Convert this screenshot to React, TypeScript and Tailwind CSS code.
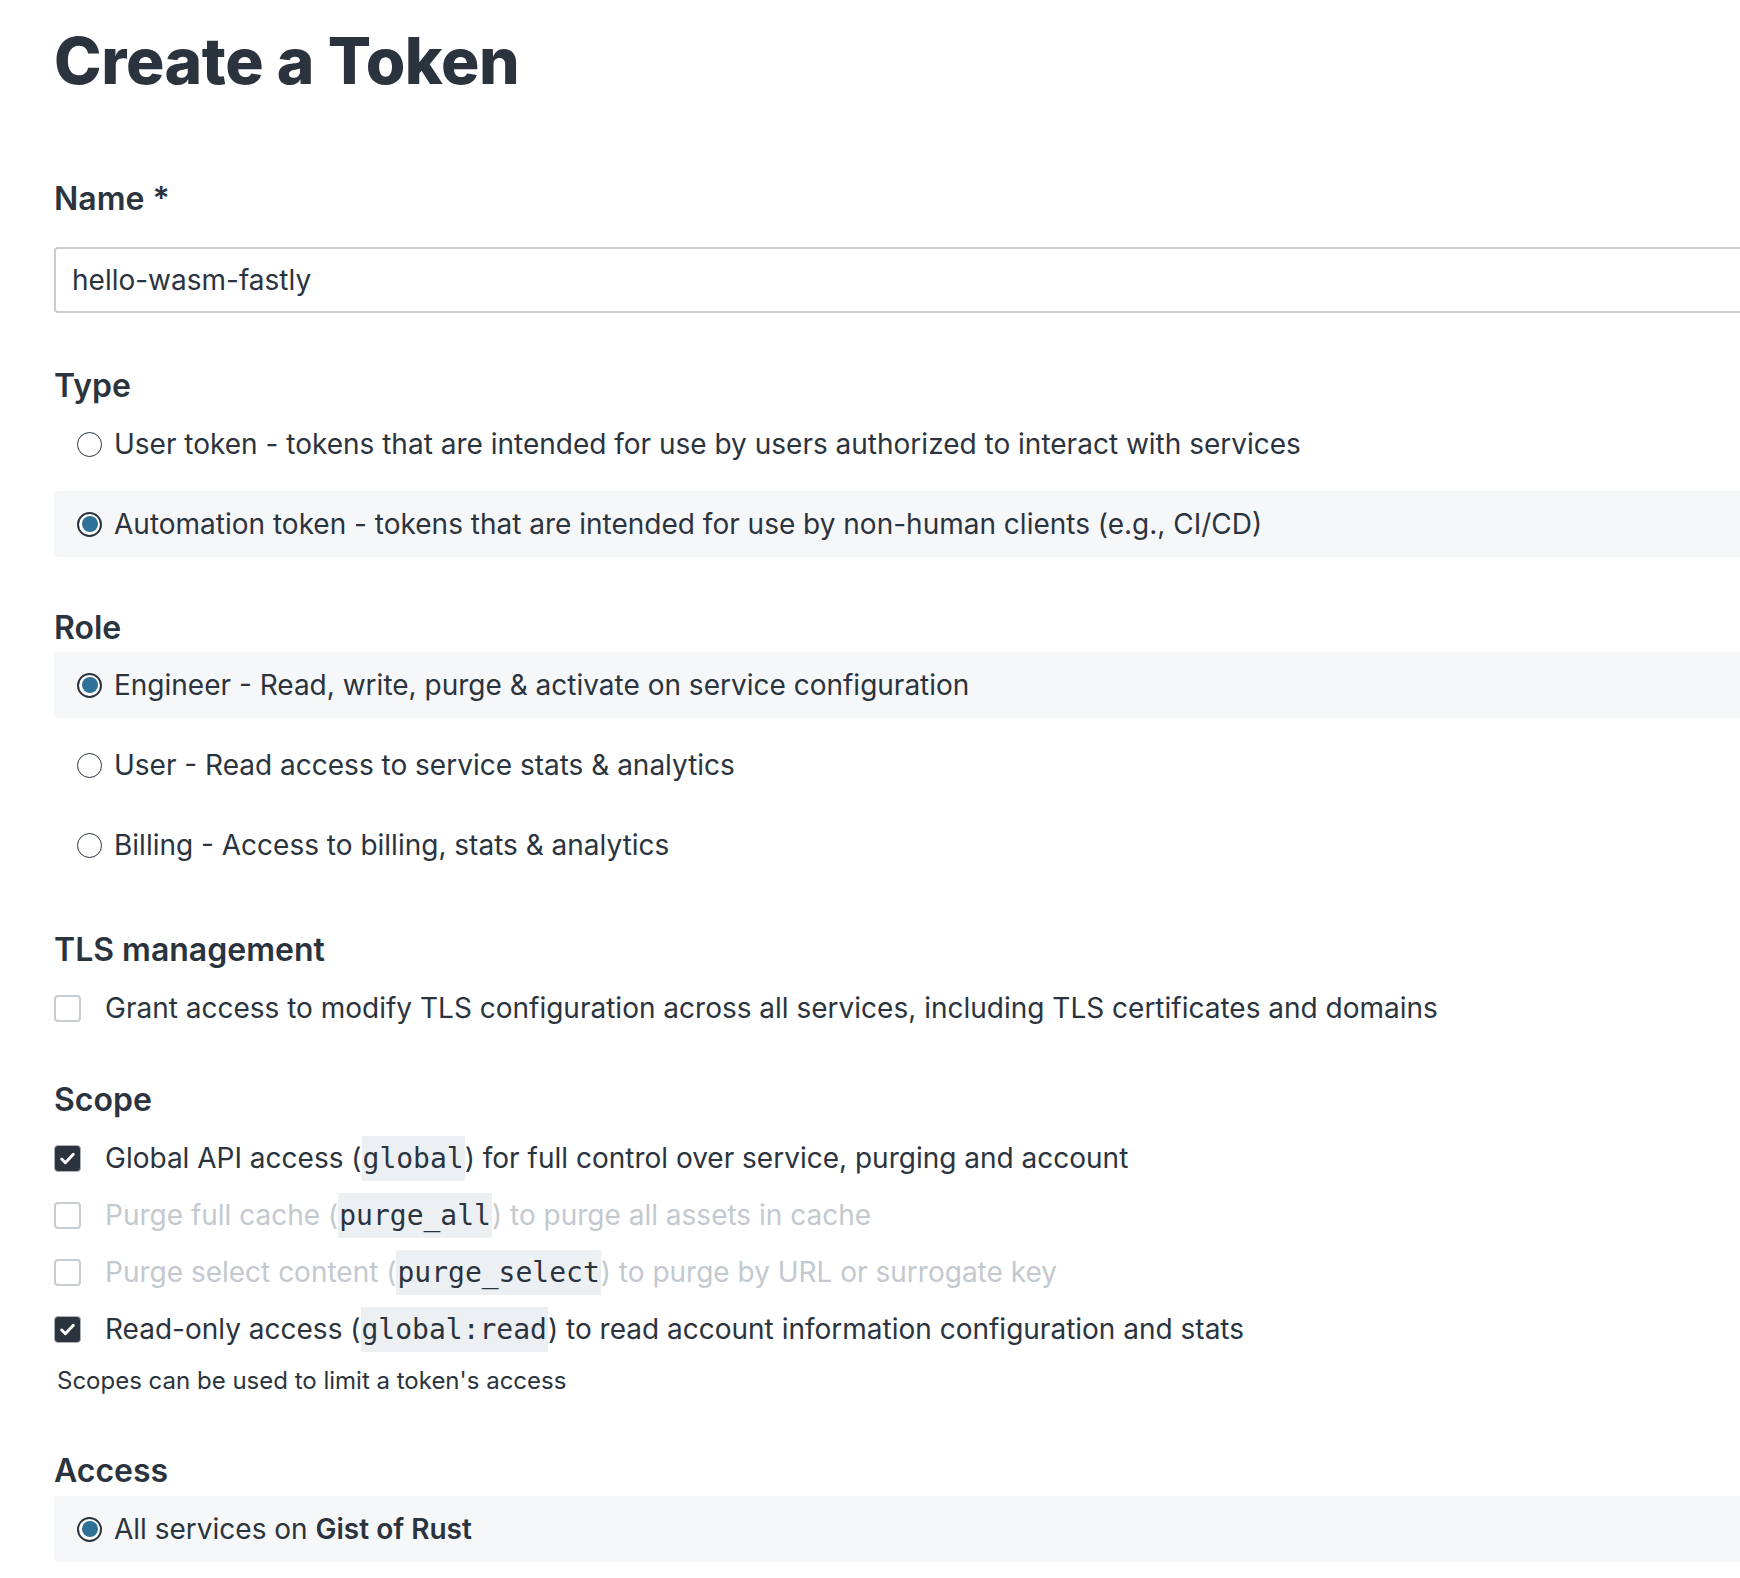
import React from "react";

// Create a Token form — token type, role, TLS and scope settings.

const ink = "text-[#2b343e]";

function Radio({ checked }: { checked?: boolean }) {
  if (checked) {
    return (
      <span className="flex h-[25px] w-[25px] shrink-0 items-center justify-center rounded-full border-2 border-[#2b343e] bg-white">
        <span className="h-[16px] w-[16px] rounded-full bg-[#2f7199]" />
      </span>
    );
  }
  return <span className="h-[25px] w-[25px] shrink-0 rounded-full border-[1.5px] border-[#2b343e] bg-white" />;
}

function Checkbox({ checked }: { checked?: boolean }) {
  if (checked) {
    return (
      <span className="flex h-[27px] w-[27px] shrink-0 items-center justify-center rounded-[4px] border-[1.5px] border-[#a9b1b9] bg-[#2b343e]">
        <svg width="19" height="19" viewBox="0 0 18 18" fill="none">
          <path d="M3.5 9.5l3.5 3.5 7.5-8" stroke="white" strokeWidth="2.8" strokeLinecap="round" strokeLinejoin="round" />
        </svg>
      </span>
    );
  }
  return <span className="h-[27px] w-[27px] shrink-0 rounded-[4px] border-2 border-[#c8cdd2] bg-white" />;
}

function RadioRow({ checked, children }: { checked?: boolean; children: React.ReactNode }) {
  return (
    <div
      className={`flex h-[66px] items-center gap-[12px] rounded-[4px] pl-[23px] ${checked ? "bg-[#f6f7f9]" : ""}`}
    >
      <Radio checked={checked} />
      <span className="text-[28px] leading-none">{children}</span>
    </div>
  );
}

function Code({ children }: { children: React.ReactNode }) {
  return (
    <code
      className={`inline-block bg-[#edf0f3] px-[1px] text-[28px] leading-[45px] ${ink}`}
      style={{ fontFamily: '"DejaVu Sans Mono", monospace' }}
    >
      {children}
    </code>
  );
}

function CheckRow({
  checked,
  disabled,
  children,
}: {
  checked?: boolean;
  disabled?: boolean;
  children: React.ReactNode;
}) {
  return (
    <div className="flex h-[45px] items-center gap-[24px]">
      <Checkbox checked={checked} />
      <span className={`whitespace-nowrap text-[28px] leading-[45px] ${disabled ? "text-[#c3c9cf]" : ""}`}>
        {children}
      </span>
    </div>
  );
}

function Label({ children, className = "" }: { children: React.ReactNode; className?: string }) {
  return <h2 className={`text-[32px] font-semibold leading-none ${className}`}>{children}</h2>;
}

export default function App() {
  return (
    <div
      className={`min-h-screen w-full overflow-hidden bg-white ${ink}`}
      style={{ fontFamily: 'Inter, "Noto Sans", sans-serif' }}
    >
      <div className="w-[1780px] pl-[54px] pt-[29px]">
        <h1 className="text-[64px] font-extrabold leading-none tracking-[-0.4px]">Create a Token</h1>

        {/* name */}
        <Label className="mt-[90px]">Name *</Label>
        <input
          readOnly
          defaultValue="hello-wasm-fastly"
          className={`mt-[32px] block h-[66px] w-full rounded-[4px] border-2 border-[#c8cdd2] bg-white pl-[16px] text-[28px] outline-none ${ink}`}
        />

        {/* type */}
        <Label className="mt-[57px]">Type</Label>
        <div className="mt-[9px] flex flex-col gap-[14px]">
          <RadioRow>User token - tokens that are intended for use by users authorized to interact with services</RadioRow>
          <RadioRow checked>
            Automation token - tokens that are intended for use by non-human clients (e.g., CI/CD)
          </RadioRow>
        </div>

        {/* role */}
        <Label className="mt-[55px]">Role</Label>
        <div className="mt-[8px] flex flex-col gap-[14px]">
          <RadioRow checked>Engineer - Read, write, purge &amp; activate on service configuration</RadioRow>
          <RadioRow>User - Read access to service stats &amp; analytics</RadioRow>
          <RadioRow>Billing - Access to billing, stats &amp; analytics</RadioRow>
        </div>

        {/* tls */}
        <Label className="mt-[56px]">TLS management</Label>
        <div className="mt-[20px]">
          <CheckRow>
            Grant access to modify TLS configuration across all services, including TLS certificates and domains
          </CheckRow>
        </div>

        {/* scope */}
        <Label className="mt-[53px]">Scope</Label>
        <div className="mt-[20px] flex flex-col gap-[12px]">
          <CheckRow checked>
            Global API access (<Code>global</Code>) for full control over service, purging and account
          </CheckRow>
          <CheckRow disabled>
            Purge full cache (<Code>purge_all</Code>) to purge all assets in cache
          </CheckRow>
          <CheckRow disabled>
            Purge select content (<Code>purge_select</Code>) to purge by URL or surrogate key
          </CheckRow>
          <CheckRow checked>
            Read-only access (<Code>global:read</Code>) to read account information configuration and stats
          </CheckRow>
        </div>
        <p className="ml-[3px] mt-[17px] text-[24px] leading-none">Scopes can be used to limit a token's access</p>

        {/* access */}
        <Label className="mt-[62px]">Access</Label>
        <div className="mt-[9px]">
          <RadioRow checked>
            All services on <span className="font-semibold">Gist of Rust</span>
          </RadioRow>
        </div>
      </div>
    </div>
  );
}
